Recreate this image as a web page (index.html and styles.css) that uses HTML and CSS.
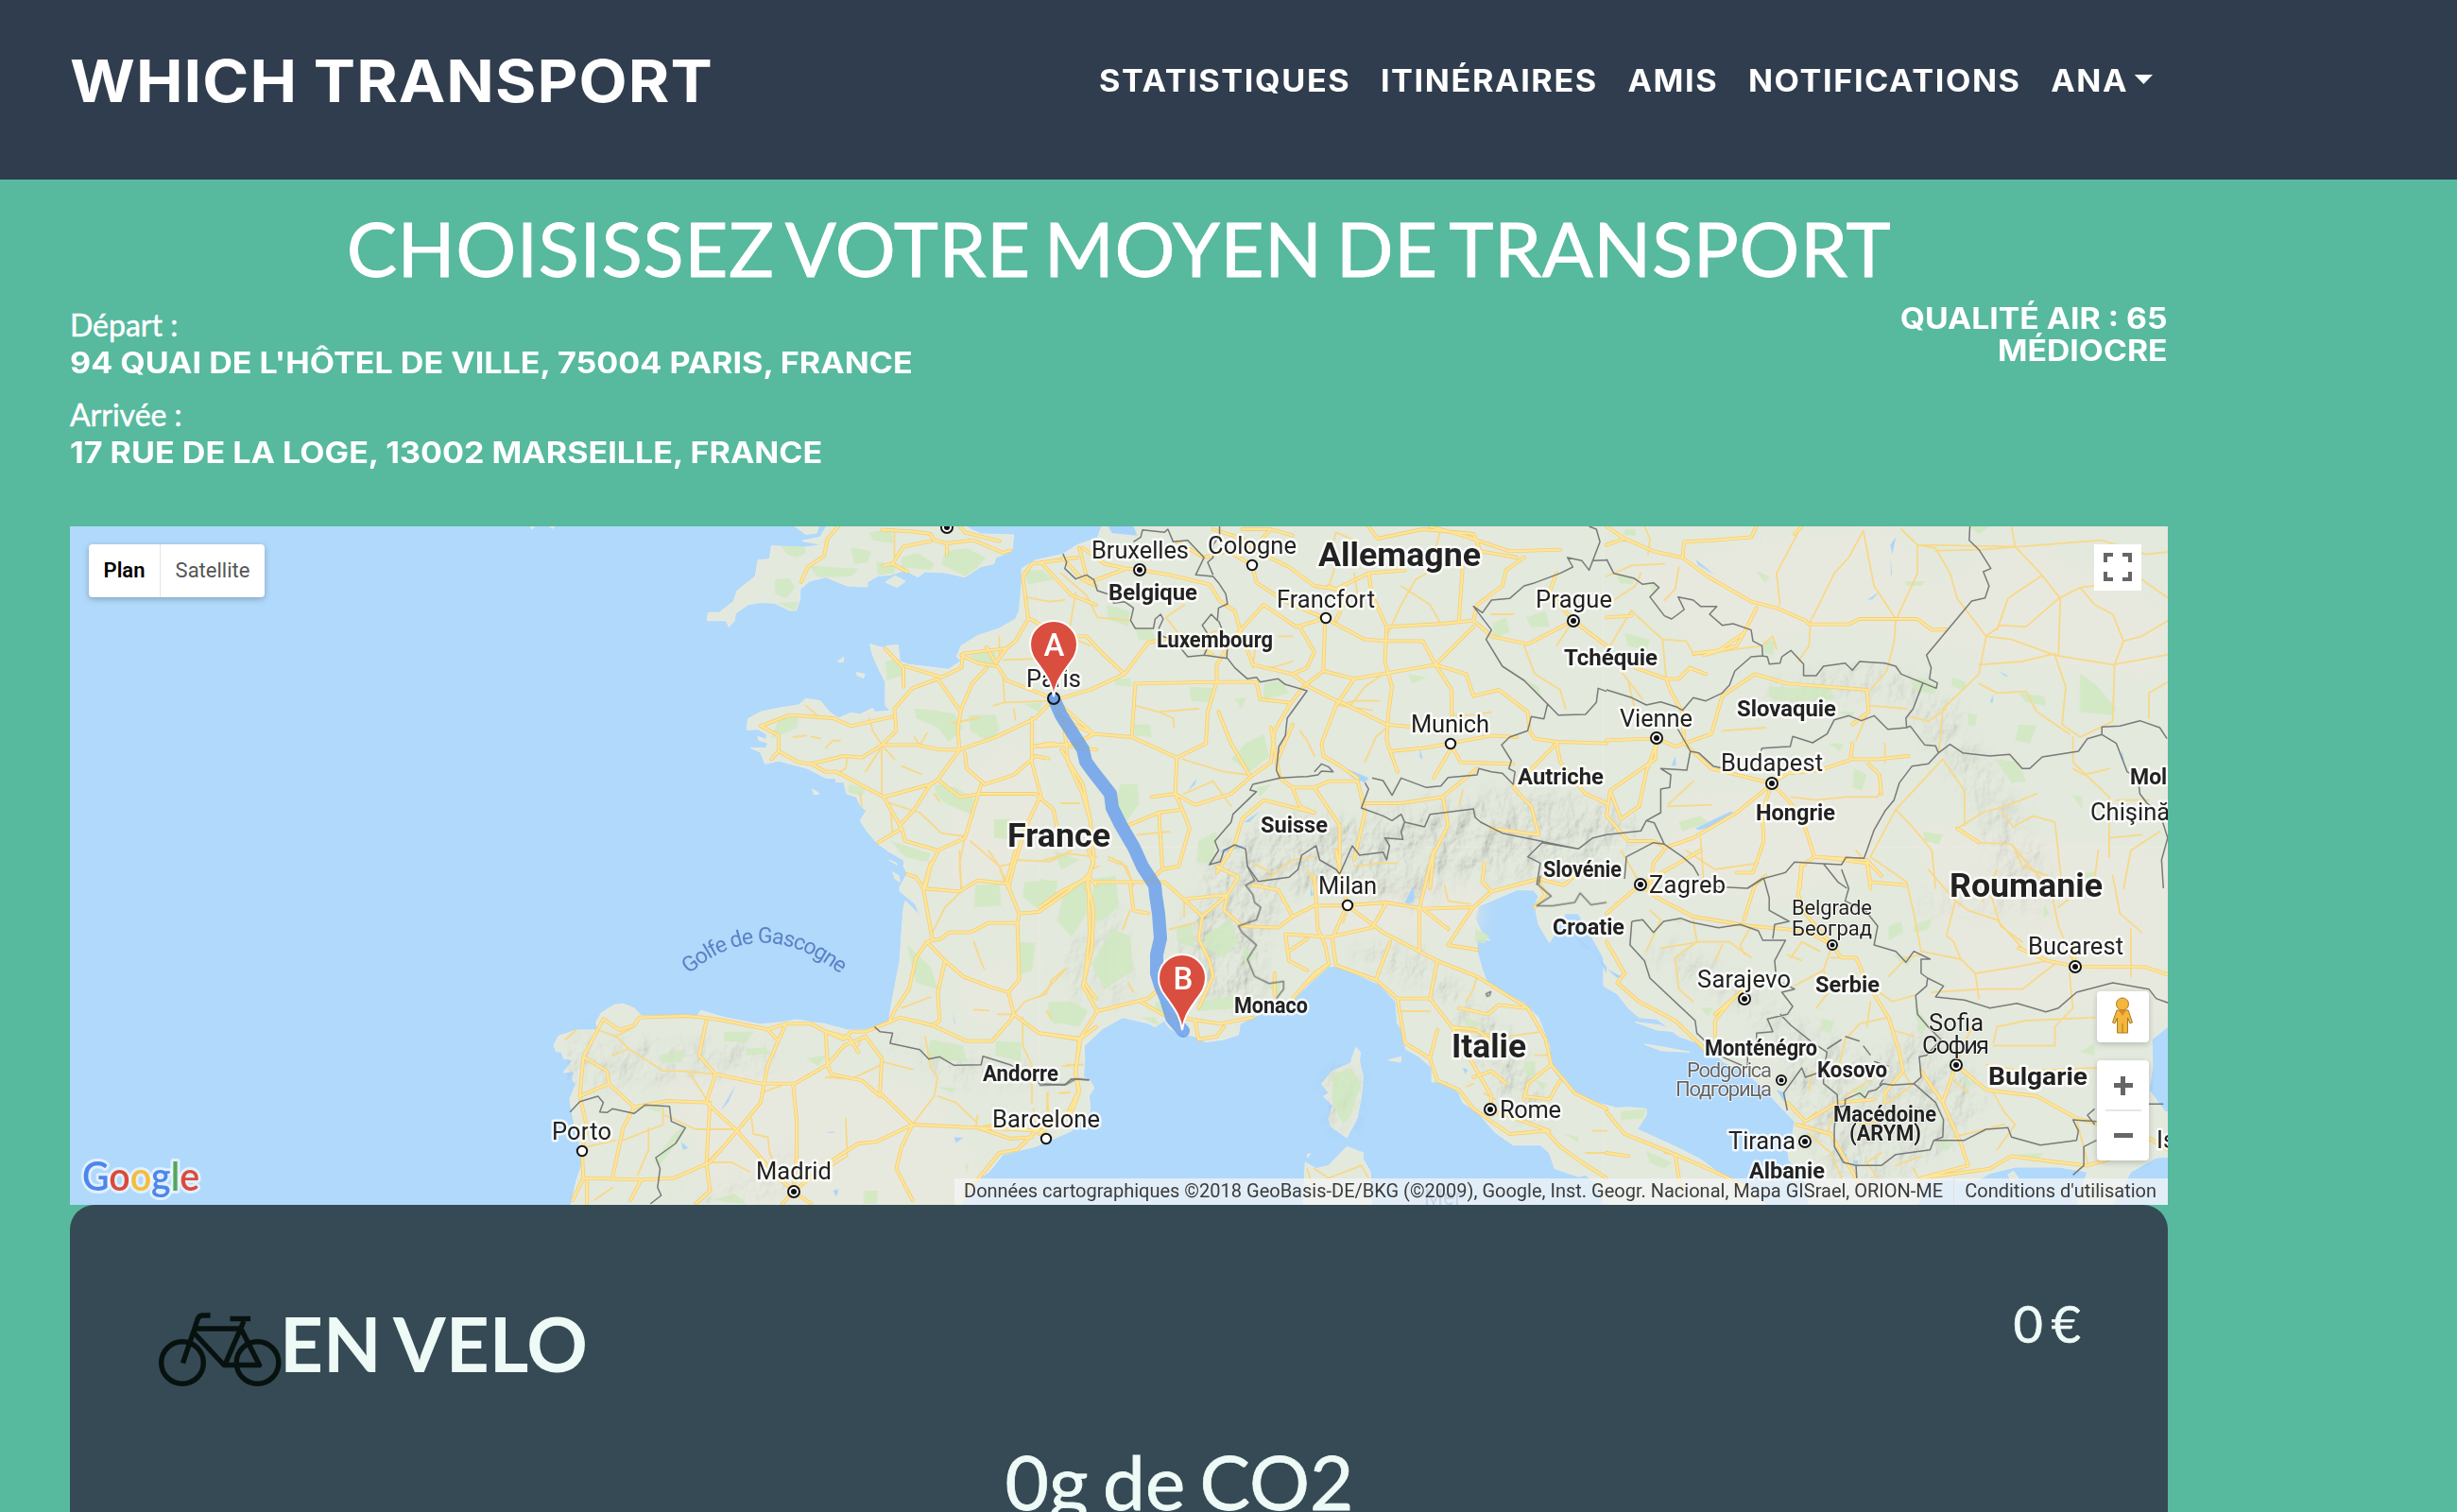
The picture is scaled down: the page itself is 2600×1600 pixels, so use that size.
FILE: index.html
```html
<!DOCTYPE html>
<html lang="fr">
<head>
<meta charset="utf-8">
<title>Which Transport</title>
<link rel="stylesheet" href="styles.css">
</head>
<body>
<header class="navbar">
  <a class="brand">WHICH TRANSPORT</a>
  <nav class="nav">
    <a>STATISTIQUES</a><a>ITINÉRAIRES</a><a>AMIS</a><a>NOTIFICATIONS</a><a>ANA<i class="caret"></i></a>
  </nav>
</header>
<main class="page">
  <h1 class="title">CHOISISSEZ VOTRE MOYEN DE TRANSPORT</h1>
  <section class="trip">
    <div class="stops">
      <p class="label">Départ :</p>
      <p class="address">94 QUAI DE L'HÔTEL DE VILLE, 75004 PARIS, FRANCE</p>
      <p class="label second">Arrivée :</p>
      <p class="address">17 RUE DE LA LOGE, 13002 MARSEILLE, FRANCE</p>
    </div>
    <div class="air"><p>QUALITÉ AIR : 65</p><p>MÉDIOCRE</p></div>
  </section>
  <section class="map">
    <svg class="canvas" viewBox="74 557 2220 718" width="2220" height="718">
      <defs>
        <filter id="relief" x="0" y="0" width="100%" height="100%">
          <feTurbulence type="fractalNoise" baseFrequency="0.05 0.035" numOctaves="4" seed="7" result="n"/>
          <feDiffuseLighting in="n" surfaceScale="9" lighting-color="#fff" result="l"><feDistantLight azimuth="225" elevation="50"/></feDiffuseLighting>
          <feGaussianBlur in="SourceAlpha" stdDeviation="10" result="m"/>
          <feComposite in="l" in2="m" operator="in"/>
        </filter>
        <g id="major">
          <g transform="translate(560 540) scale(.38265 .33333)">
            <path d="M855 51L825 90 815 145 770 180 752 228M975 62L1065 68 1110 75 1120 95 1155 105 1230 95 1310 135 1330 128M1110 98L1035 115 1005 170 980 176M1005 170L1045 195M1190 51L1205 70 1300 98M1155 105V140M1515 150L1390 170 1365 210 1380 345 1345 415 1320 438 1200 455 1195 500 1140 530 1040 495M1385 345L1470 400M1195 460L1240 485 1295 495 1320 540 1410 580 1450 600M1265 500L1225 550 1195 630 1185 690 1190 760 1135 760 1075 745 975 745M1130 535L1190 635M1130 535L1060 565 1010 630 1015 700 975 745 920 785 870 780 780 805 745 800 690 765M1005 655L890 685 840 660 720 650 640 685 690 715 690 765 670 790M780 805L820 830 850 830 980 910 1110 870 1130 855 1190 760 1290 720 1400 660 1450 600M1205 770L1210 820 1260 870 1340 840 1400 780 1435 788M980 910L1030 1010 1040 1050 1130 1080 1205 1040 1250 870M1130 855L1190 910 1250 900 1400 900 1450 950 1460 1010M1130 1085L1110 1130 1095 1200M1390 660L1390 800 1415 905 1375 1000 1340 1130 1325 1200M1450 600L1480 690 1490 800 1530 900 1550 980M1395 750L1440 740 1568 760M1415 165L1500 270 1568 300M1475 150L1530 220 1568 240M1320 438L1290 485 1265 435M1035 560L1035 500 985 440M1030 1010L965 1055M1110 870L1065 950 1025 1000"/>
          </g>
          <g transform="translate(1100 540) scale(.38265 .33333)">
            <path d="M110 120L135 230 240 185 277 189 360 205 470 235 500 290 540 320 560 400 590 490 700 520 745 560 830 610M240 185L180 170 120 120M380 100L455 150 520 130 588 173 600 230 680 290 790 343M480 60L560 90 600 130 690 180 760 240 820 250 910 200 1010 190M700 80L640 60 560 60M640 60L600 110M910 51L935 90 1060 60 1200 75 1220 130 1320 150M1080 51L1170 80 1300 130 1440 125M910 200L920 270 960 370 1115 360 1200 350 1210 300 1280 240 1290 190 1340 150M1160 350L1170 180M790 343L710 370 620 300 540 400 490 490 490 545M790 343L785 510 730 560M790 343L900 410 960 415 1060 415 1095 490 1200 370M820 350L850 270 800 240M720 370L760 450 740 500 700 520M785 510L870 535 1095 490 1140 570 1140 650M1095 490L1180 520 1200 590 1270 570 1350 640 1355 700 1370 725 1430 735 1568 740M870 535L820 620 780 740 785 780 830 810 880 850M960 370L955 480 975 560 965 640 960 730 970 765 990 830M835 610L960 680 1050 690M970 765L1060 755 1136 740 1250 715 1320 720M1136 740L1165 800 1310 805M1136 760L1090 850M50 600L140 570 235 520 170 450 130 400 30 400M235 520L300 420 400 395 480 460M265 550L490 545 600 545 610 600 690 610M265 550L255 720 150 710 60 660M255 720L380 785 460 740 465 640 490 545M380 785L375 900 395 950 415 1010 385 1130 340 1140 300 1180M310 910L375 900 430 935 530 900 590 840 640 800 650 700 690 620 730 560M580 840L530 740 495 640M665 850L640 690M700 680L655 800 665 850 700 880 760 880 800 860 880 860M700 880L720 940 760 960 620 920 560 980 540 1060 490 1150M760 880L830 1000 830 1170M880 860L900 960 870 1110M900 930L1000 930 1115 910 1210 820M1115 910L1130 1000 1090 1090 1080 1200M1310 880L1360 940 1380 1030 1250 1010M1310 880L1430 740 1440 800 1510 900 1568 930M60 620L150 710 100 740 0 750M60 760L120 870 140 980 150 1100 130 1200M245 1000L330 960 395 950M340 1140L330 960M1200 350L1250 400 1350 425 1476 350 1568 430M1476 350L1410 260 1430 200"/>
          </g>
          <g transform="translate(1700 540) scale(.38265 .33333)">
            <path d="M0 51L50 90 130 130 210 150 280 210 400 290 470 310 550 350 560 362 670 362 700 345 860 345 900 380 940 378M0 110L50 90M210 150L215 100 300 95 400 85 415 51M240 455L310 445 380 390 415 310M380 390L360 430 270 460M80 500L165 535 200 535 230 500 275 520M165 535L180 580 210 640 215 740 190 750 138 724 0 730M215 740L290 710 320 590 410 520 500 550 610 560 720 570 725 640 680 680M215 740L290 820 457 867 510 930 550 1010 575 1100 720 1110 760 1160M457 867L500 835 590 825 680 790 750 790 835 780M680 740L675 790M725 805L755 840 760 900M457 867L430 960 435 1050 405 1150 360 1150M440 885L360 960 240 1040 165 1070 130 1120 120 1200M138 740L135 790 10 890 0 970 60 1050 130 1050 165 1070M10 890L40 980 90 940 110 830 138 740M575 1100L540 1130 535 1200M720 1110L730 1200M970 1010L1030 1055M0 340L68 335M540 51L520 75"/>
          </g>
          <g transform="translate(560 900) scale(.38265 .33333)">
            <path d="M1110 40L1090 120 1115 285 1100 290 1150 350 1200 400 1280 435 1325 450 1340 520 1410 580 1525 597 1568 560M1100 290L1070 340 1050 440 1010 510 995 545 930 575 890 575 870 600 820 575 780 550 710 550 660 568 540 540 480 530 430 525 305 530 290 555 250 570 205 535M1115 285L1140 280 1160 260 1220 260 1270 230 1350 230 1355 200 1320 100 1345 0M1350 230L1355 410 1325 450M1355 200L1410 195 1490 130 1545 80 1568 110M1545 80L1550 260 1535 420 1568 470M1045 75L1070 85 1090 120 1190 130 1240 95 1320 105M1150 350L1130 450 1135 540 1115 555 1025 530 995 545M1115 555L1210 605 1280 605 1330 540 1340 520M205 535L150 655 140 780 160 880 146 955 150 1040 120 1110M150 655L215 700 220 740 290 815 380 795 490 800 515 710 470 650 490 540M140 780L220 740M490 800L575 890 500 990 400 1040 310 1045 150 1040M290 815L260 880 230 1040M310 1045L280 1110M710 550L660 680 640 800 575 890M515 710L640 740 735 740 825 680 820 580M825 680L870 620 930 590 975 660 970 770 1060 870 1240 880 1330 915 1390 910M825 680L835 710 920 730 970 780M730 745L740 860 740 960 731 1082M660 570L685 600M1060 870L1030 940 1015 1010 1060 1110M1060 870L960 925 910 930 830 990 731 1082 690 1040M575 890L690 1040M1525 597L1510 710 1520 770 1500 830 1410 880 1350 950 1300 960 1200 1100M1240 880L1420 890M731 1082L700 1122M731 1082L780 1122M160 1040V1122M500 800L490 990 500 1080 460 1122M820 575L885 595 910 640"/>
          </g>
          <g transform="translate(1100 900) scale(.38265 .33333)">
            <path d="M0 180L60 130 130 90 150 40 135 0M130 90L150 190 145 310 120 430 160 510 110 600 0 580M150 100L250 100 345 100 400 155 450 210 440 280 470 350 480 400 440 500M250 100L260 190 300 200M450 210L520 140 550 85 490 50M400 155L520 140M520 140L510 190 560 240 660 245 700 210 760 175 850 174 960 165 1060 185 1200 180 1250 130 1380 90 1450 110 1500 60M590 110L660 125 700 210M760 80L770 250 790 300 800 360 740 420M820 0L850 174 950 260 1100 350 1210 400 1350 500 1400 600 1415 680 1480 770 1568 820M850 174L810 280 820 365 930 410 990 470 1080 470 1100 350M680 265L800 275 920 245 960 165M680 265L690 350 740 380M690 320L740 280M1050 185V320M1090 0L1050 185M1200 180L1170 230 1130 300 1210 315M1060 185L1130 250M970 290L930 410M990 470L1010 610 1080 660 1100 730 1160 760 1200 820 1300 900 1400 890 1440 940 1500 990 1568 1040M1080 470L1140 560 1210 570 1290 640M1140 560L1200 680 1250 780 1246 822 1340 860 1410 890M1200 720L1250 700 1290 740M1415 680L1350 740 1340 790M1340 780L1410 790 1440 730M160 510L300 470 340 430M280 480L340 520 440 540 500 550 590 530M430 540L440 600 490 590 510 560M110 600L100 700 110 760 80 830 0 900M1080 660L1100 570M1380 100L1400 140 1370 180M1230 40L1225 100 1250 130M1160 500L1240 520 1270 490 1340 500M650 390L650 460M700 470L760 390 800 360"/>
          </g>
          <g transform="translate(1700 900) scale(.38265 .33333)">
            <path d="M94 108L40 160 0 200M94 108L140 150 240 210 400 240 500 250 560 260 624 301 650 340 690 340 720 420 780 530 810 640 820 700M94 108L200 40 260 0M0 290L50 390 30 420 90 480 190 540 280 640M540 40L530 140 550 200 624 301M580 20L720 40 730 100 830 110M380 220L410 110 440 80M1140 310L1220 350 1296 368 1490 370 1568 400M1296 368L1290 290M967 680L1050 760 1190 780 1300 850 1400 880M967 680L930 800 980 930 1000 1000 870 1040M870 1040L1000 1020 1060 1010 1120 970 1250 990 1330 1000 1420 970M0 830L50 900 190 965 200 1040 210 1080M190 965L300 1020 390 1070M0 960L60 970M500 800L550 860 640 800 740 790M820 700L770 770 770 800M348 472L300 540 300 590M300 520L381 440 400 400M930 800L870 700M525 870L620 900 700 1060M1480 900L1568 960"/>
          </g>
        </g>
        <g id="minor">
          <path transform="translate(560 540) scale(.38265 .33333)" d="M1010 60V150M940 660L950 700 975 745 1010 790M970 760L930 830M975 750L975 910M1030 812L1085 838M730 720L765 715M780 718L805 724M820 755L840 730 860 732M765 620L795 650M880 785L875 820 850 835M1065 720L1080 745 1100 708M1170 675L1240 660M1310 530L1315 610 1440 605M1285 620L1315 610M1300 400L1300 480M1310 475L1440 470M1340 630L1345 665M1370 275L1440 290 1480 285M1205 1040L1190 1120 1195 1200M985 925L1080 960 1140 1025 1205 1035M1220 1050L1300 1130 1320 1180M1120 900L1135 925M1340 1110L1440 1115 1500 1080M1000 960L1005 1030M915 900L920 940"/>
          <path transform="translate(1100 540) scale(.38265 .33333)" d="M60 200L130 270 160 340 250 350M100 260L80 400 140 430M400 300L350 340 390 400M265 620L330 640 440 630M330 640L370 660 372 690M395 790L510 830 580 840M60 930L110 930M270 1030L360 1020M820 620L870 605 940 605M830 620L920 635M1040 640L1050 690M960 400L1000 300 1040 220 1070 200M1000 240L1080 300 1110 360M1110 60L1095 120M820 170L800 240M700 400L660 400M700 480L640 500M720 700L740 730 760 780M440 400L500 380M600 400L590 500M1340 430L1370 520 1440 570 1455 630M1476 350L1430 430M1310 330L1250 330M880 270L870 200M880 100L820 70 810 110M620 1180L700 1110 760 1100M190 1100L230 1120 260 1190M400 900L480 860 530 940M860 620L900 560 950 520M900 800L930 720 960 690M1250 640L1200 650 1140 650M1160 940L1170 890"/>
          <path transform="translate(1700 540) scale(.38265 .33333)" d="M105 51L120 90 115 140M200 180L190 250 160 285M0 210L70 175 160 170M0 300L80 240 95 200M68 318L155 410 165 535M68 318L0 450M155 410L220 415 240 455M100 600L40 510M480 300L470 200 530 70M565 345L560 430 530 480M570 340L630 200 670 150 710 65 740 240 800 345M800 350L860 200 860 110 910 120M815 60L860 110 1130 115 1200 200 1255 280 1250 460M910 120L950 200 970 280 1050 400M910 128L1040 125 1370 95 1490 140 1568 130M1120 51L1130 115M1050 400L1090 365 1160 370 1250 280 1310 245 1350 300 1400 330 1430 415 1405 490M1200 210L1110 280 1080 380M1050 400L1120 410 1240 460 1400 490 1568 455M1430 415L1480 400 1568 340M1310 245L1480 220 1568 290M1050 400L1030 520 930 630 920 760M1030 490L1150 480 1240 455M1240 460L1270 560 1260 680 1310 720 1400 670 1405 490M1030 550L1080 580 1160 575 1190 640 1280 710M1500 660L1500 580 1568 535M800 350L795 420 775 510 730 570M840 655L890 670 940 630M240 460L430 430 460 400 470 440M930 790L800 950 730 1100M930 790L990 890 990 1000M800 950L850 1010 900 1080 910 1200M1290 720V800L1390 910 1390 1100M1290 820L1320 840 1390 820M1410 920L1500 920M970 1010L1040 960 1100 940 1190 900M1095 960L1125 1005 1180 970 1240 990 1260 1200M1030 1055L1120 1060 1200 1170M1390 1040L1480 1030M170 940L290 935M170 935L240 860M260 1040L270 1200M510 910L580 920 660 910 750 910 760 880M770 740L770 800M725 620L830 630M720 650L690 730M320 700L440 690M60 540L80 640M1430 1200L1450 1080 1530 1020"/>
          <path transform="translate(560 900) scale(.38265 .33333)" d="M1190 0L1195 130 1150 180 1115 260M1270 0L1300 50 1315 100M1300 50L1340 40M1410 35L1490 10 1568 20M1230 290L1245 340 1258 375M1030 500L1110 465M1295 520L1340 520 1370 480 1430 455 1445 410 1485 375M1230 505L1270 508M1435 510L1442 530M1365 530L1365 620 1390 680 1390 800M1095 590L1110 690 1130 720 1120 780 1060 870M1130 780L1180 800 1235 860M1240 840L1235 880 1280 870M290 560L240 590 275 630 370 700 440 700 490 790M190 570L240 590M230 650L275 630M130 570L100 600M420 700L515 710M370 815L370 870 260 920M330 880L330 950 300 1030M375 840L460 885 575 885M640 770L700 745M615 850L620 900 660 910 665 960 700 1040M580 890L490 990M490 990L560 990 610 1020M875 850L880 970 840 1000M575 895L500 990M240 920L160 940M230 1070L180 1110M975 670L1060 695M975 680L900 720M820 720L890 725M920 590L910 620M1475 685L1530 680M1465 770L1495 768M1435 770L1430 850M1395 820L1400 900"/>
          <path transform="translate(1100 900) scale(.38265 .33333)" d="M190 30L240 50 260 110M140 60L165 50M250 190L230 250M360 250L430 230M0 465L70 380M20 510L30 530M245 420L260 450M400 155L400 210M590 40L640 70M870 50L940 40 990 40M740 60L760 110M1120 110L1130 160 1190 170M840 230L850 200M940 390L950 350M1180 480L1200 440 1210 400M1150 570L1300 590 1390 575M1370 650L1410 650M1230 770L1260 790M1180 750L1200 740M990 510L1080 510M760 1010L800 1040 890 1000 910 1040M740 1010L760 1080M1530 890L1568 890M1510 960L1568 960M20 770L25 830M60 770L80 768M75 680L120 680"/>
          <path transform="translate(1700 900) scale(.38265 .33333)" d="M120 190L150 220 110 320M150 310L260 290 340 290 400 340M240 220L250 290 190 340 200 440 240 480M320 300L300 350M400 240L370 300 381 330M510 340L540 290 590 320M624 301L600 380 620 440 580 500M650 340L620 340M690 390L640 440M720 420L790 480 850 460M780 400L830 340 870 330M780 530L700 550 660 600 640 700M790 570L850 590M820 700L840 740M720 560L730 480M720 40L690 0M730 20L830 100 850 200 870 320 980 345 1020 390 1030 470M980 345L960 290 940 270 965 160 890 60M965 160L1000 190 1080 220 1150 310M1060 130L1090 240 1150 290M1080 60L1040 160M1230 130L1250 240 1296 368M1250 180L1350 90 1360 0M1450 250V400M1400 80L1420 200 1480 260M1130 0L1150 50 1220 80M1020 390L1130 370 1220 350M900 450L1040 440 1150 440 1240 360M1280 390L1290 500 1240 560M1240 560L1240 620 1070 620M1070 610L1080 560 1160 540 1350 530M967 680L1010 560M1050 680L1150 700 1350 690M1350 690L1450 720M1000 770L960 730M1070 770L1100 830 1130 870M1130 870L1080 950M960 910L1100 870M1300 850L1310 900 1330 990M640 800L610 900M560 900L620 960 650 1040M540 870L580 830M570 700L560 760M660 780L740 720M870 700L900 760M780 800L850 740M500 330L540 350M700 870L760 860M520 430L600 380M220 0L300 60 420 40M40 0L94 108M850 1010L870 1060M200 965L160 960M750 1040L720 990 760 960M800 1000L870 970"/>
        </g>
      </defs>

      <rect class="sea" x="74" y="557" width="2220" height="718"/>
      <g class="land">
        <g transform="translate(560 540) scale(.38265 .33333)">
          <path d="M728 45L765 76 795 72 802 45ZM825 45L805 85 755 97 812 110 760 118 670 113 665 155 633 158 625 210 575 255 565 290 525 325 495 325 492 350 545 350 552 370 568 350 570 328 605 300 640 292 680 295 720 318 738 318 748 285 750 250 775 225 820 212 880 240 935 243 935 228 965 208 1000 205 1040 190 1075 212 1095 195 1150 198 1205 212 1250 178 1285 170 1290 150 1335 130 1340 78 1250 75 1225 62 1200 45ZM985 228L1012 208 1040 225 1018 245Z"/>
          <path d="M1580 85L1515 110 1475 140 1400 158 1362 185 1362 230 1355 320 1345 345 1300 375 1240 398 1195 430 1182 465 1195 478 1160 505 1050 490 1025 480 1020 428 990 430 980 437 942 425 950 460 965 500 985 545 985 620 1000 637 955 640 950 628 915 648 890 643 855 660 830 640 805 605 765 598 745 618 690 628 640 640 605 662 602 697 632 695 658 712 655 728 632 718 635 730 660 738 655 755 612 755 640 768 652 805 690 795 770 820 820 850 848 850 848 862 870 862 878 900 905 910 915 935 932 955 915 985 935 1020 965 1060 985 1075 1040 1110 1035 1130 1052 1165 1042 1200 1580 1200ZM853 480L870 466 868 482ZM905 515L928 520 925 532 908 525ZM783 885L803 900 788 902ZM0 45L8 60 20 45ZM50 45L65 58 75 45Z"/>
        </g>
        <path transform="translate(1100 540) scale(.38265 .33333)" d="M0 157L65 140 160 90 172 51 1600 51 1600 1200 0 1200Z"/>
        <path transform="translate(1700 540) scale(.38265 .33333)" d="M-10 45H1600V1200H-10Z"/>
        <path transform="translate(560 900) scale(.38265 .33333)" d="M990 0L1035 30 1045 75 1025 115 1025 130 1068 170 1090 235 1075 200 1040 160 1035 185 1030 260 1025 350 1010 440 1000 500 995 540 955 562 925 570 880 570 815 550 780 545 740 537 700 545 640 552 540 530 475 508 465 525 310 525 290 500 260 487 235 490 200 515 185 545 190 570 130 570 80 590 68 620 75 638 90 640 95 660 120 665 95 705 125 700 120 730 130 740 112 790 118 830 130 900 145 950 145 1000 130 1050 116 1125 1195 1125 1230 1050 1272 1020 1300 980 1310 965 1400 940 1500 890 1550 830 1548 780 1562 755 1548 728 1533 720 1535 620 1580 572 1580 0ZM1005 68L1022 80 1025 100 1012 90ZM995 30L1015 40 1018 46Z"/>
        <path transform="translate(1100 900) scale(.38265 .33333)" d="M0 -10V930L50 895 130 835 140 820 135 755 150 752 138 728 120 720 125 660 120 620 160 575 230 530 300 548 320 560 345 540 360 565 385 580 430 590 460 608 510 600 550 585 555 550 590 530 650 500 700 475 740 430 800 368 830 368 890 400 940 425 985 480 990 550 1010 580 1012 630 1050 655 1085 690 1085 735 1125 732 1160 770 1170 800 1210 830 1260 895 1310 935 1385 935 1410 960 1425 1010 1490 1035 1510 1030 1540 1060 1568 1125H1590V815L1500 790 1440 730 1415 690 1410 620 1380 530 1340 485 1240 425 1225 380 1210 320 1210 280 1245 285 1220 255 1205 215 1215 175 1250 160 1320 125 1365 125 1380 145 1370 175 1380 235 1410 292 1425 265 1455 200 1490 200 1510 240 1535 290 1590 400V-10ZM875 625L887 640 885 670 895 720 890 780 878 850 850 912 805 875 800 850 812 810 785 780 800 770 780 740 810 700 860 675ZM735 990L765 1010 800 1000 850 940 895 960 895 980 915 1020 918 1125H730ZM965 665L1000 655 998 672ZM740 965L750 962 742 975Z"/>
        <path transform="translate(1700 900) scale(.38265 .33333)" d="M-8 -10V430L30 455 60 500 90 530 140 535 200 590 250 610 290 620 320 670 380 700 440 760 470 800 495 830 520 860 515 900 500 940 505 985 545 1030 560 1125H860L880 1050 950 1045 1020 1050 1060 1025 1130 1005 1250 1005 1330 1020 1300 1125H1400L1450 1020 1520 975 1600 970V840L1545 830 1500 760 1510 690 1508 600 1568 545H1600V-10ZM-8 820L60 815 110 820 110 840 85 885 190 940 260 980 330 1040 400 1080 440 1125H-8ZM80 545L150 555 190 575 140 570ZM105 615L160 625 230 640 150 635ZM1110 1030L1125 1018 1140 1040 1120 1050Z"/>
      </g>
      <g class="plain">
        <path d="M700 1140L860 1130 980 1150 1010 1200 1040 1230 1010 1274H760L730 1200Z"/>
        <path d="M1720 600L1880 570 2000 560 2050 620 2130 570 2290 640V720L2120 700 1960 660 1800 690Z"/>
        <path d="M1010 840L1070 780 1110 830 1090 920 1000 940ZM1790 840L2000 830 1980 920 1860 960 1760 900ZM1360 960L1560 930 1570 980 1420 990ZM2020 870L2290 900V1080L2080 1060ZM1010 1040L1070 1010 1090 1070 1030 1090Z"/>
      </g>
      <g class="relief">
        <path d="M1250 990L1290 900 1370 860 1440 870 1500 850 1600 840 1700 850 1740 880 1660 920 1540 930 1500 960 1420 930 1350 950 1330 1030 1350 1060 1300 1065 1250 1040Z"/>
        <path opacity=".6" d="M940 1100L1000 1115 1110 1135 1110 1150 1010 1145ZM600 1100L760 1105 830 1110 820 1130 640 1150 600 1140Z"/>
        <path d="M1420 1000L1500 1010 1600 1100 1640 1190 1600 1180 1540 1060ZM1402 1135L1435 1130 1430 1200 1410 1190Z"/>
        <path opacity=".7" d="M1730 1010L1820 1050 1880 1100 1920 1220 1960 1260 2060 1220 2100 1160 2040 1080 1980 1120 1900 1080 1780 1000ZM2010 960L2180 960 2140 860 2060 740 1990 700 1860 730 1880 750 2000 730 2090 850 2120 930Z"/>
        <path d="M780 1270L840 1210 830 1270ZM700 1270L790 1250 780 1274ZM1130 1010L1180 950 1200 1060 1130 1060Z" opacity=".5"/>
      </g>
      <g class="forest">
        <path transform="translate(560 540) scale(.38265 .33333)" d="M695 115L760 115 765 135 740 150 715 140ZM680 220L720 215 735 245 710 280 680 265ZM1030 150L1075 135 1120 170 1110 190 1030 180ZM1150 130L1210 120 1262 150 1240 180 1205 210 1140 170ZM960 165L1010 170 1010 200 965 205ZM770 175L830 180 910 185 890 210 800 212ZM890 118L945 130 935 165 900 170ZM985 480L1020 470 1040 520 990 540ZM1365 190L1420 190 1450 220 1380 235ZM1065 630L1120 635 1175 645 1200 690 1160 735 1130 690 1070 660ZM1215 650L1290 650 1300 700 1270 735 1220 700ZM690 660L745 655 740 690 670 725ZM1120 870L1180 880 1235 920 1230 970 1150 930 1125 900ZM1285 980L1330 980 1325 1045 1285 1040ZM1000 1050L1110 1090 1100 1115 1040 1100ZM1210 450L1290 450 1290 490 1240 485ZM885 870L930 885 920 905 880 895ZM685 295L745 290 735 318ZM940 70L1000 60 1008 105 950 95ZM1370 615L1420 610 1410 640Z"/>
        <path transform="translate(1100 540) scale(.38265 .33333)" d="M185 300L250 320 245 370 190 345ZM265 375L310 380 320 410 275 410ZM205 535L250 535 255 560 210 555ZM415 560L480 565 480 610 420 605ZM620 550L670 540 690 580 620 600ZM260 680L305 680 310 720 265 715ZM570 740L620 710 635 780 580 830 530 790ZM225 870L270 870 275 930 240 990 210 930ZM1255 360L1290 340 1300 385 1255 410ZM1345 340L1400 320 1410 370 1360 370ZM1340 535L1380 560 1390 600ZM1020 520L1070 530 1030 550ZM600 880L640 870 610 910ZM440 1050L490 1020 480 1120 435 1120ZM540 600L570 595 560 630Z"/>
        <path transform="translate(1700 540) scale(.38265 .33333)" d="M50 390L120 410 110 445 60 430ZM30 205L80 215 70 235 35 230ZM410 190L450 210 440 230ZM825 225L880 225 870 240 830 238ZM435 415L465 415 460 460 435 450ZM450 560L620 565 630 600 500 605 450 595ZM840 540L870 530 915 560 905 585 850 570ZM955 530L995 545 990 570 955 560ZM1310 520L1350 550 1410 630 1400 650 1310 640ZM1140 580L1210 590 1215 620 1160 610ZM1140 680L1190 685 1170 740 1130 730ZM1000 645L1025 650 1020 685 1000 680ZM1075 790L1140 800 1160 860 1120 865ZM875 1020L930 1030 920 1060 880 1050ZM615 740L655 740 645 765ZM685 820L720 840 705 890 680 880ZM200 990L260 970 280 990 210 1020ZM50 60L80 60 80 80 50 78ZM1005 51L1060 51 1030 75ZM120 235L145 240 130 270ZM1290 905L1315 910 1315 950ZM640 640L685 640 680 655Z"/>
        <path transform="translate(560 900) scale(.38265 .33333)" d="M1235 110L1300 105 1305 175 1230 180ZM1370 100L1460 95 1455 140 1400 180 1365 145ZM1480 130L1540 85 1540 200 1500 275 1460 225ZM1355 290L1400 295 1390 380 1355 395ZM1045 300L1110 370 1130 440 1070 420ZM1435 480L1500 480 1545 510 1520 560 1440 540ZM1110 600L1200 620 1210 670 1100 660ZM1290 605L1360 610 1360 670 1290 650ZM540 575L620 575 600 610 540 605ZM600 630L650 625 670 645 600 650ZM360 650L430 635 420 670 365 675ZM345 990L400 900 430 870 420 910 360 1000ZM765 660L820 650 800 685ZM925 1080L965 1080 960 1122 925 1122ZM500 1110L570 1090 600 1122ZM320 815L370 815 360 830ZM1205 1000L1215 990 1210 1030ZM1130 750L1180 755 1170 770ZM1015 0L1110 10 1085 35Z"/>
        <path transform="translate(1100 900) scale(.38265 .33333)" d="M150 90L210 80 220 180 160 230 145 180ZM0 90L50 100 40 170 0 180ZM200 250L250 270 260 380 180 440 145 360ZM30 490L110 490 100 540 40 550ZM440 480L540 460 550 500 440 510ZM380 240L420 230 430 310 380 290ZM455 270L530 220 550 290 510 340 460 310ZM560 300L600 330 570 370ZM320 480L345 480 350 510 320 510ZM280 530L320 530 330 555ZM1205 250L1245 270 1230 295 1205 290ZM1340 670L1370 670 1370 720 1345 710ZM1370 730L1405 740 1390 760ZM1450 900L1490 910 1490 925ZM810 710L860 690 890 740 860 840 840 870 810 800ZM630 430L670 420 660 460ZM1170 530L1230 550 1190 570ZM40 0L110 30 60 60Z"/>
        <path transform="translate(1700 900) scale(.38265 .33333)" d="M780 240L815 225 820 260 780 285ZM850 240L900 215 890 250 850 260ZM790 330L850 340 830 365ZM260 500L295 500 280 525ZM595 535L630 540 620 580 595 570ZM850 490L890 550 870 590ZM40 830L110 820 100 850 40 855ZM110 955L180 990 160 1010 120 990ZM910 920L960 930 940 955ZM1140 965L1210 960 1180 990ZM1210 170L1225 200 1210 210ZM1310 70L1355 70 1340 100ZM1350 610L1350 650 1310 640ZM680 760L720 750 700 790ZM480 770L500 770 490 800ZM980 720L1020 740 1000 750ZM180 220L215 220 200 230Z"/>
      </g>
      <g class="lake">
        <path transform="translate(1100 540) scale(.38265 .33333)" d="M830 812L860 825 910 850 900 865 865 848ZM500 1080L540 1062 575 1068 540 1075 505 1090ZM565 990L610 955 580 990ZM1050 750L1060 790 1052 785ZM410 890L435 850 430 870ZM190 51L260 51 270 80 200 72Z"/>
        <path transform="translate(1700 540) scale(.38265 .33333)" d="M245 1010L345 955 350 965 290 1005 255 1015ZM180 810L190 780 192 810ZM245 155L300 205 255 175ZM785 110L800 85 790 140ZM720 285L755 258 735 282ZM1085 510L1115 528 1100 525ZM1060 610L1070 585 1068 610ZM1425 760L1432 795 1424 785ZM785 150L790 215 786 200ZM425 70L430 110 427 90Z"/>
        <path transform="translate(560 900) scale(.38265 .33333)" d="M530 825L572 742 550 800ZM420 925L440 945 425 950ZM820 893L850 893 835 897ZM1170 515L1180 555 1175 545ZM840 1080L855 1075 850 1100ZM1175 910L1200 912 1180 928Z"/>
        <path transform="translate(1100 900) scale(.38265 .33333)" d="M1010 165L1035 110 1035 160 1020 170ZM750 120L758 140 750 145ZM1170 690L1185 695 1178 710ZM1535 320L1568 370 1568 390ZM1480 270L1530 320 1500 300Z"/>
        <path transform="translate(1700 900) scale(.38265 .33333)" d="M470 760L495 770 490 795ZM650 955L665 965 660 995 650 985ZM680 985L697 985 692 1000ZM0 375L40 400 30 405Z"/>
      </g>
      <use href="#minor" class="minor-road"/>
      <use href="#major" class="road-case"/>
      <use href="#major" class="road"/>

      <g class="border">
        <path transform="translate(1100 540) scale(.38265 .33333)" d="M65 138L75 165 70 185 100 218 130 205 150 220 160 255 200 270 205 295 235 290 260 310 252 350 265 375 315 375 320 345 335 330 342 345 330 375 340 400 365 410 385 430 410 465 455 460 475 410 450 365 475 330 492 350 495 310 520 297 515 265 495 230 480 210 432 205 455 150 410 95 370 100 355 60 345 70 285 62 280 85 260 100 M498 51V80L480 110 480 150 465 165 480 205M455 460L520 470 540 500 575 535 600 530 610 545 660 535 680 553 740 573 685 660 680 715 662 750 655 825 665 850 740 845 770 840 780 828 812 830 800 815 780 805 760 830M495 350L520 420 518 470M665 850L590 870 582 888 600 893 535 965 530 990 485 1050 495 1080 470 1125 500 1115 510 1080 540 1062 570 1075 575 1130 605 1178 690 1165 715 1140 725 1095 765 1065 775 1110 820 1140 830 1155 865 1065 885 1095 950 1085 960 1110 968 1065 955 1040 1005 1045 1000 1020 1010 990 1065 1005 1080 965 1200 948 1205 975 1220 990 1280 1025 1490 1075 1530 1040 1568 1030M900 865L910 885 890 945 950 970 975 985 1000 965 1010 990M920 850L950 858 975 905 1000 850 1070 880 1110 875 1130 848 1210 840 1215 820 1250 830 1280 835 1310 870 1315 830 1298 820 1305 795 1278 745 1300 720 1350 700 1360 655 1395 662 1405 615 1340 540 1280 495 1235 410 1250 380 1200 305 1225 325 1250 285 1300 280 1340 240 1370 230 1440 200 1475 180 1460 150 1500 160 1520 190 1550 100 1540 60 1520 51M1405 615L1435 650 1510 648 1540 610 1545 565 1568 575M1520 190L1530 160 1568 158M1490 1075L1390 1055 1350 1100 1385 1120 1375 1190"/>
        <path transform="translate(1700 540) scale(.38265 .33333)" d="M0 155L20 200 75 215 100 235 130 230 145 245 120 275 160 335 180 345 215 315 198 275 240 285 260 305 305 305 285 330 320 365 350 360 400 380 405 415 430 430 432 462 400 465 355 510 340 555 320 580 275 605 240 595 210 635 195 625 150 608 110 618 70 595 0 570M430 462L445 465 450 488 480 485 485 465 510 445 545 488 545 525 580 525 600 495 660 485 680 508 700 480 770 485 800 495 815 520 875 548 912 565 915 548 893 535 898 500 885 460 1010 288 1047 278 1058 240 1042 195 1063 185 1030 125 1003 95 1005 51M875 548L848 630 828 660 830 690 778 695 740 652 705 668 670 652 630 665 610 710 570 738 515 718 508 750 430 755 420 790M830 690L840 685 880 745 910 748 918 770 950 743 985 770 1060 780 1115 775 1150 820 1170 820 1205 783 1305 765 1330 725 1370 712 1370 688 1420 685 1475 668 1530 690 1550 725M1370 712L1410 740 1440 830 1470 850 1475 900 1495 930 1530 960 1552 1040 1535 1110 1540 1200M918 770L890 805 845 812 810 865 795 920 770 955 740 1015 720 1080 712 1105 662 1102 650 1125 600 1122 520 1117 495 1150 430 1170 390 1200M195 690L232 765 222 825 150 820 178 840 175 880 150 885 150 960 110 985 95 1018 0 1030M232 765L255 770 295 812 320 818M110 985L132 992 160 1060 210 1100 240 1130 255 1160M160 1060L130 1055 55 1100 50 1170M600 1122L640 1180 665 1200"/>
        <path transform="translate(560 900) scale(.38265 .33333)" d="M955 560L970 575 1005 580 998 612 1080 632 1105 662 1135 655 1175 682 1250 680 1255 653 1330 680 1350 695 1390 700 1410 740 1480 745 1500 725 1548 728M113 830L140 797 190 780 205 800 195 830 215 832 230 820 290 835 320 808 388 812 393 860 432 880 405 930 350 975 362 1010 355 1070 365 1095 335 1122"/>
        <path transform="translate(1100 900) scale(.38265 .33333)" d="M575 50L595 95 570 110 590 140 595 165 612 180 600 220 550 240 560 260 600 300 575 345 595 400 635 422 675 415 675 440 655 470M1385 80L1380 110 1415 145 1375 175 1420 175 1480 165 1495 135 1525 172 1568 165M0 745L75 742 100 725 138 728M1235 455L1248 448 1245 460 1238 463Z"/>
        <path transform="translate(1700 900) scale(.38265 .33333)" d="M70 225L100 220 130 260 158 225 205 215 235 228 310 245 370 235 420 255 432 285 495 285 465 350 470 410 520 440 485 450 515 495 500 520 445 535 460 575 415 580 415 610 390 640 390 690 350 670 320 655 250 580 245 540 120 405 105 350 65 300 70 225M255 90L300 115 390 120 435 88 450 150 450 190 505 225 465 235 460 280M650 60L670 120 660 160 715 190 750 240 740 300 800 320 828 355 850 320 895 345 870 345 870 390 888 405 885 430 855 460 860 520 890 560 925 600 885 650 865 655 870 720 850 740 790 745 765 740 745 760 725 765 715 785 700 770 660 790 660 810 640 815 638 775 600 740 600 700 550 720 540 690 490 770 500 825M888 405L932 430 910 465 990 475 1060 500 1135 485 1215 512 1250 500 1300 450 1400 420 1500 440 1520 470 1568 490M480 520L510 555 570 610 610 640 600 700M630 880L635 840 640 815M630 880L630 940 655 990 690 1000 760 1000 800 965 895 950 905 920 930 910 932 855 910 800 850 740M690 1000L692 1040M905 920L990 920 1050 885 1110 880 1120 910 1200 935 1300 920 1305 890 1290 855 1355 860M1350 870L1330 840 1350 820M1500 805H1540M1355 920L1320 940V1000L1290 1030M610 630L650 600M660 590L700 605M710 620L730 650M740 670L780 685M780 700L755 745"/>
      </g>

      <polyline class="route" points="1115,739 1123,757 1146,793 1149,806 1157,817 1175,840 1177,855 1186,873 1200,897 1209,917 1222,937 1223,947 1226,967 1228,993 1224,1010 1224,1030 1228,1043 1234,1057 1240,1077 1252,1091"/>

      <g class="dot">
        <circle cx="1325" cy="598" r="5.2"/><circle cx="1403" cy="654" r="5.2"/><circle cx="1535" cy="787" r="5.2"/><circle cx="1426" cy="958" r="5.2"/><circle cx="1107" cy="1205" r="5.2"/><circle cx="616" cy="1218" r="5.2"/>
        <circle cx="1206" cy="603" r="6"/><circle cx="1665" cy="657" r="6"/><circle cx="1753" cy="781" r="6"/><circle cx="1875" cy="829" r="6"/><circle cx="1736" cy="936" r="6"/><circle cx="1939" cy="1000" r="5"/><circle cx="1846" cy="1057" r="6"/><circle cx="2070" cy="1127" r="6"/><circle cx="2196" cy="1023" r="6"/><circle cx="1885" cy="1143" r="5"/><circle cx="1910" cy="1208" r="6"/><circle cx="1577" cy="1174" r="6"/><circle cx="840" cy="1261" r="6"/><circle cx="1002" cy="558" r="6"/><circle cx="1115" cy="739" r="6" fill="#6fa0ea"/>
      </g>
      <g class="core">
        <circle cx="1206" cy="603" r="3"/><circle cx="1665" cy="657" r="3"/><circle cx="1753" cy="781" r="3"/><circle cx="1875" cy="829" r="3"/><circle cx="1736" cy="936" r="3"/><circle cx="1939" cy="1000" r="2.5"/><circle cx="1846" cy="1057" r="3"/><circle cx="2070" cy="1127" r="3"/><circle cx="2196" cy="1023" r="3"/><circle cx="1885" cy="1143" r="2.5"/><circle cx="1910" cy="1208" r="3"/><circle cx="1577" cy="1174" r="3"/><circle cx="840" cy="1261" r="3"/><circle cx="1002" cy="558" r="3"/>
      </g>

      <g class="city">
        <text x="1155" y="591" textLength="103">Bruxelles</text>
        <text x="1278" y="586" textLength="94">Cologne</text>
        <text x="1351" y="643" textLength="104">Francfort</text>
        <text x="1625" y="643" textLength="81">Prague</text>
        <text x="1493" y="775" textLength="83">Munich</text>
        <text x="1086" y="727" textLength="58">Paris</text>
        <text x="1395" y="946" textLength="62">Milan</text>
        <text x="1714" y="769" textLength="77">Vienne</text>
        <text x="1821" y="816" textLength="108">Budapest</text>
        <text x="2212" y="868">Chişinău</text>
        <text x="2146" y="1010" textLength="101">Bucarest</text>
        <text x="1745" y="945" textLength="81">Zagreb</text>
        <text x="1796" y="1045" textLength="99">Sarajevo</text>
        <text class="thin" x="2034" y="1115" textLength="71">София</text>
        <text class="thin" x="2041" y="1091" textLength="58">Sofia</text>
        <text x="1829" y="1216" textLength="71">Tirana</text>
        <text x="2282" y="1215">Istanbul</text>
        <text x="1587" y="1183" textLength="65">Rome</text>
        <text x="1050" y="1193" textLength="114">Barcelone</text>
        <text x="800" y="1248" textLength="80">Madrid</text>
        <text x="584" y="1206" textLength="63">Porto</text>
      </g>
      <g class="city small">
        <text class="thin" x="1896" y="990" textLength="85">Београд</text>
        <text class="thin" x="1896" y="968" textLength="85">Belgrade</text>
        <text class="thin faint" x="1773" y="1160" textLength="102">Подгорица</text>
        <text class="thin faint" x="1785" y="1140" textLength="90">Podgorica</text>
      </g>
      <g class="country">
        <text x="1173" y="635" textLength="94" lengthAdjust="spacingAndGlyphs">Belgique</text>
        <text x="1224" y="685" textLength="123" lengthAdjust="spacingAndGlyphs">Luxembourg</text>
        <text x="1655" y="704" textLength="99" lengthAdjust="spacingAndGlyphs">Tchéquie</text>
        <text x="1606" y="830" textLength="91" lengthAdjust="spacingAndGlyphs">Autriche</text>
        <text x="1334" y="881" textLength="71" lengthAdjust="spacingAndGlyphs">Suisse</text>
        <text x="1838" y="758" textLength="105" lengthAdjust="spacingAndGlyphs">Slovaquie</text>
        <text x="1858" y="868" textLength="84" lengthAdjust="spacingAndGlyphs">Hongrie</text>
        <text x="2254" y="830">Moldavie</text>
        <text x="1633" y="928" textLength="83" lengthAdjust="spacingAndGlyphs">Slovénie</text>
        <text x="1643" y="989" textLength="76" lengthAdjust="spacingAndGlyphs">Croatie</text>
        <text x="1921" y="1050" textLength="68" lengthAdjust="spacingAndGlyphs">Serbie</text>
        <text x="1804" y="1117" textLength="119" lengthAdjust="spacingAndGlyphs">Monténégro</text>
        <text x="1923" y="1140" textLength="74" lengthAdjust="spacingAndGlyphs">Kosovo</text>
        <text class="thin" x="1940" y="1187" textLength="109" lengthAdjust="spacingAndGlyphs">Macédoine</text>
        <text class="thin" x="1957" y="1207" textLength="76" lengthAdjust="spacingAndGlyphs">(ARYM)</text>
        <text x="1851" y="1247" textLength="80" lengthAdjust="spacingAndGlyphs">Albanie</text>
        <text x="1306" y="1072" textLength="78" lengthAdjust="spacingAndGlyphs">Monaco</text>
        <text x="1040" y="1144" textLength="80" lengthAdjust="spacingAndGlyphs">Andorre</text>
        <text class="mid" x="2104" y="1148" textLength="105" lengthAdjust="spacingAndGlyphs">Bulgarie</text>
        <text class="big" x="1395" y="599" textLength="172" lengthAdjust="spacingAndGlyphs">Allemagne</text>
        <text class="big" x="1066" y="896" textLength="109" lengthAdjust="spacingAndGlyphs">France</text>
        <text class="big" x="1536" y="1119" textLength="79" lengthAdjust="spacingAndGlyphs">Italie</text>
        <text class="big" x="2063" y="949" textLength="162" lengthAdjust="spacingAndGlyphs">Roumanie</text>
      </g>
      <path id="gulf" d="M729 1031Q806 964 891 1032" fill="none"/>
      <text class="water"><textPath href="#gulf" textLength="177">Golfe de Gascogne</textPath></text>
      <text class="water" x="1507" y="1275">Mer</text>

      <g class="pin">
        <path transform="translate(1115 657)" d="M0 80C-2 65-8 58-14 49-20 41-25 35-25 25A25 25 0 0 1 25 25C25 35 20 41 14 49 8 58 2 65 0 80Z"/>
        <text x="1115.500" y="694">A</text>
        <path transform="translate(1251 1010)" d="M0 80C-2 65-8 58-14 49-20 41-25 35-25 25A25 25 0 0 1 25 25C25 35 20 41 14 49 8 58 2 65 0 80Z"/>
        <text x="1252" y="1047">B</text>
      </g>
      <text class="google" x="87" y="1260" textLength="124" lengthAdjust="spacingAndGlyphs"><tspan fill="#4d86ec">G</tspan><tspan fill="#db4a39">o</tspan><tspan fill="#f4bd3a">o</tspan><tspan fill="#4d86ec">g</tspan><tspan fill="#57a65b">l</tspan><tspan fill="#db4a39">e</tspan></text>
    </svg>

    <div class="types"><span class="on">Plan</span><span>Satellite</span></div>
    <div class="full"><svg width="30" height="30" viewBox="0 0 30 30"><path d="M2 10V2H10M20 2H28V10M28 20V28H20M10 28H2V20" fill="none" stroke="#666" stroke-width="4"/></svg></div>
    <div class="pegman"><svg width="24" height="40" viewBox="0 0 24 40"><g fill="#f4b73b" stroke="#a77a2a" stroke-width="1"><path d="M6 14H18L22.500 27 20 28 17.500 22V38H6.500V22L4 28 1.500 27Z"/><circle cx="12" cy="7.500" r="6.500"/></g><path d="M8 14H16L12 20Z" fill="#e0862b"/><path d="M12 28V38" stroke="#a77a2a"/></svg></div>
    <div class="zoom"><b class="plus"></b><hr><b></b></div>
    <div class="credits"><span>Données cartographiques ©2018 GeoBasis-DE/BKG (©2009), Google, Inst. Geogr. Nacional, Mapa GISrael, ORION-ME</span><span class="terms">Conditions d'utilisation</span></div>
  </section>

  <section class="card">
    <div class="card-head">
      <h2 class="mode"><svg width="130" height="78" viewBox="0 0 130 78"><g fill="none" stroke="#07120f" stroke-width="5.400" stroke-linejoin="round"><circle cx="25" cy="53" r="22.300"/><circle cx="104.500" cy="53" r="22.300"/><path d="M54.600 3H46Q42 3 40.500 9L25.500 53.500" /><path d="M37 17H87L106.500 55.500H69L36 20M90 9L70.500 54"/><path d="M75.500 6.500H97"/></g></svg><span>EN VELO</span></h2>
      <span class="price">0 €</span>
    </div>
    <p class="co2">0g de CO2</p>
  </section>
</main>
</body>
</html>
```
FILE: styles.css
```css
* { box-sizing: border-box; margin: 0; padding: 0; }
body { width: 2600px; height: 1600px; overflow: hidden; background: #57b99e; color: #fff; font-family: Lato, sans-serif; }

.navbar { display: flex; justify-content: space-between; height: 190px; padding: 49px 322px 0 74px; background: #303d4e; font-family: Inter, sans-serif; font-weight: 700; white-space: nowrap; }
.brand { font-size: 62px; line-height: 74px; letter-spacing: 1px; transform: scaleX(1.07); transform-origin: left; }
.nav { display: flex; gap: 29.500px; height: 57px; padding-top: 17px; font-size: 32px; line-height: 40px; transform: scaleX(1.07); transform-origin: right; }
.nav a { letter-spacing: 1.500px; }
.caret { display: inline-block; margin-left: 6px; vertical-align: 8px; border: 9.500px solid transparent; border-top: 10px solid #fff; border-bottom: 0; }

.page { width: 2220px; margin-left: 74px; padding-top: 24px; }
.title { font-size: 80px; line-height: 96px; font-weight: 400; letter-spacing: .5px; word-spacing: -7px; text-align: center; white-space: nowrap; -webkit-text-stroke: .8px; }
.trip { display: flex; justify-content: space-between; height: 247px; }
.stops { padding-top: 15px; }
.label { font-size: 32px; line-height: 38px; -webkit-text-stroke: .5px; }
.label.second { margin-top: 17px; }
.address { margin-top: 2px; font: 700 31px/38px Inter, sans-serif; transform: scaleX(1.1); transform-origin: left; }
.air { padding-top: 10px; text-align: right; font: 700 31px/33.500px Inter, sans-serif; transform: scaleX(1.09); transform-origin: right; }

.map { position: relative; height: 718px; overflow: hidden; font-family: Roboto, sans-serif; }
.canvas { display: block; }
.sea { fill: #b1d9fb; }
.land { fill: #e3e9dd; stroke: #ebebe2; stroke-width: 1; }
.land path { vector-effect: non-scaling-stroke; }
.plain { fill: #ece9df; opacity: .6; filter: blur(9px); }
.relief { filter: url(#relief); mix-blend-mode: multiply; opacity: .2; }
.forest { fill: #d0e8c0; opacity: .85; }
.lake { fill: #a9d4fb; }
#major path, #minor path { fill: none; vector-effect: non-scaling-stroke; stroke-linejoin: round; stroke-linecap: round; }
.minor-road { stroke: #f8d888; stroke-width: 1.800px; }
.road-case { stroke: #f3cf7c; stroke-width: 3.900px; }
.road { stroke: #fee698; stroke-width: 2.200px; }
.border path { fill: none; stroke: #787a78; stroke-width: 1.500px; vector-effect: non-scaling-stroke; stroke-linejoin: round; }
.route { fill: none; stroke: #5e98ee; stroke-opacity: .76; stroke-width: 14px; stroke-linecap: round; stroke-linejoin: round; }
.dot { fill: #fff; stroke: #151515; stroke-width: 2px; }
.core { fill: #111; }
.city, .country { fill: #222; stroke: rgba(255, 255, 255, .8); stroke-width: 5px; stroke-linejoin: round; paint-order: stroke; font-size: 25.500px; }
.city.small { font-size: 22px; }
.thin { stroke-width: 2px; }
.faint { fill: #666; }
.country { font-size: 23px; font-weight: 700; }
.mid { font-size: 26px; }
.big { font-size: 35px; }
.water { fill: #5b82c6; font-size: 23px; }
.pin path { fill: #da4e40; stroke: #fff; stroke-width: 2px; }
.pin text { fill: #fff; font-size: 33px; font-weight: 500; text-anchor: middle; }
.google { font: 600 42px Lato, sans-serif; stroke: rgba(255, 255, 255, .6); stroke-width: 6px; stroke-linejoin: round; paint-order: stroke; }

.types, .full, .pegman, .zoom, .credits { position: absolute; background: #fff; color: #555; }
.types { left: 20px; top: 19px; display: flex; width: 186px; height: 56px; border-radius: 4px; box-shadow: 0 2px 6px rgba(0, 0, 0, .25); font-size: 22px; line-height: 55px; }
.types span { flex: 1; text-align: center; }
.types .on { flex: 0 0 76px; border-right: 1px solid #e4e4e4; color: #000; font-weight: 600; }
.full { left: 2142px; top: 19px; width: 50px; height: 49px; padding: 9px 10px; }
.pegman { left: 2145px; top: 492px; width: 55px; height: 54px; padding: 6px 15px; border-radius: 4px; box-shadow: 0 2px 6px rgba(0, 0, 0, .2); }
.zoom { left: 2145px; top: 565px; display: flex; flex-direction: column; align-items: center; justify-content: space-between; width: 55px; height: 106px; padding: 24px 0; border-radius: 4px; box-shadow: 0 2px 6px rgba(0, 0, 0, .2); }
.zoom hr { width: 38px; border: 0; border-top: 2px solid #e6e6e6; }
.zoom b { width: 20px; height: 5px; background: #666; }
.zoom .plus { position: relative; }
.zoom .plus::after { content: ""; position: absolute; left: 7.500px; top: -7.500px; width: 5px; height: 20px; background: #666; }
.credits { right: 0; bottom: 0; display: flex; justify-content: space-between; width: 1284px; height: 28px; padding: 0 12px 0 10px; background: rgba(245, 245, 245, .72); color: #3c3c3c; font-size: 20px; line-height: 26px; white-space: nowrap; }
.terms { padding-left: 11px; border-left: 1px solid #e2e2e2; }

.card { height: 340px; padding: 93px 92px 0 94px; border-radius: 26px 26px 0 0; background: #354a55; color: #eefaf6; white-space: nowrap; }
.card-head { display: flex; justify-content: space-between; height: 101px; }
.mode { display: flex; align-items: flex-start; margin-top: 5px; font-size: 80px; line-height: 96px; font-weight: 700; }
.mode svg { margin-top: 16px; }
.mode span { margin-left: -2px; word-spacing: -4px; }
.price { font-size: 54px; line-height: 65px; word-spacing: -5px; -webkit-text-stroke: .6px; }
.co2 { margin-top: 50px; padding-left: 126px; font-size: 80px; line-height: 96px; text-align: center; word-spacing: -5px; -webkit-text-stroke: .8px; }
```
